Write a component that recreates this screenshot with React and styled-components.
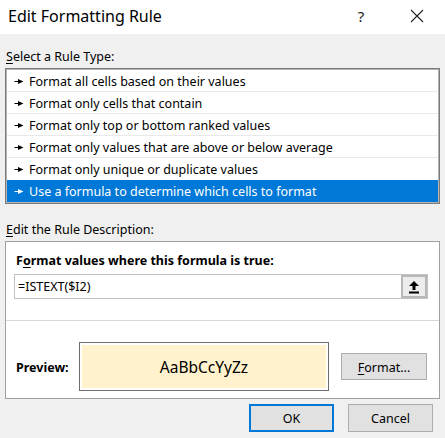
import React from "react";
import styled, { createGlobalStyle } from "styled-components";

const Global = createGlobalStyle`
  html, body { margin: 0; padding: 0; background: #f0f0f0; }
  body { font-family: "Noto Sans", "Segoe UI", sans-serif; font-size: 12.5px; color: #000; }
  #root { width: 445px; height: 438px; overflow: hidden; }
  * { box-sizing: border-box; }
`;

const Dialog = styled.div`
  width: 445px;
  height: 438px;
  background: #f0f0f0;
  display: flex;
  flex-direction: column;
`;

const TitleBar = styled.div`
  height: 34px;
  background: #fff;
  display: flex;
  align-items: center;
  padding-left: 8px;
`;

const Title = styled.div`
  flex: 1;
  font-size: 16px;
  line-height: 20px;
  margin-top: -2px;
`;

const Help = styled.div`
  width: 14px;
  font-size: 15px;
  line-height: 20px;
  margin-top: -2px;
  margin-right: 42px;
  text-align: center;
  color: #222;
`;

const Close = styled.div`
  width: 14px;
  height: 14px;
  margin-right: 21px;
  margin-top: -3px;
  display: flex;
`;

const Body = styled.div`
  padding: 0 5px;
  display: flex;
  flex-direction: column;
`;

const SectionLabel = styled.div`
  line-height: 16px;
  padding-top: 1px;
  height: 16px;
  margin-top: ${(p) => p.$top}px;
  margin-bottom: ${(p) => p.$bottom}px;
  padding-left: 1px;
`;

const U = styled.span`
  text-decoration: underline;
  text-underline-offset: 2px;
`;

const ListBox = styled.div`
  border: 1px solid #7a7a7a;
  box-shadow: inset 0 0 0 1px #b4b4b4;
  background: #fff;
  padding: 1px;
  display: flex;
  flex-direction: column;
`;

const Row = styled.div`
  height: 22px;
  display: flex;
  align-items: center;
  padding-left: 7px;
  padding-top: 2px;
  background: ${(p) => (p.$selected ? "#0078d7" : "#fff")};
  color: ${(p) => (p.$selected ? "#fff" : "#000")};
  border-bottom: 1px solid ${(p) => (p.$last ? "transparent" : "#e9e9e9")};
`;

const Bullet = styled.svg`
  width: 10px;
  height: 7px;
  margin-right: 5px;
  margin-top: -1px;
  flex: none;
`;

const DescBox = styled.div`
  border: 1px solid #a0a0a0;
  background: #fff;
  height: 158px;
  display: flex;
  flex-direction: column;
`;

const BoldLabel = styled.div`
  font-weight: bold;
  line-height: 16px;
  margin: 11px 0 0 10px;
`;

const FormulaInput = styled.div`
  margin: 5px 11px 0 8px;
  height: 25px;
  border: 1px solid #c2c2c2;
  display: flex;
  align-items: center;
  padding-left: 3px;
`;

const FormulaText = styled.div`
  flex: 1;
  line-height: 16px;
  padding-top: 1px;
`;

const CollapseBtn = styled.div`
  width: 26px;
  height: 23px;
  background: #ececec;
  border: 2px solid #b8b8b8;
  display: flex;
  align-items: center;
  justify-content: center;
`;

const Divider = styled.div`
  height: 1px;
  background: #d6d6d6;
  margin-top: 21px;
`;

const PreviewRow = styled.div`
  display: flex;
  align-items: center;
  margin-top: 21px;
  padding-left: 10px;
`;

const PreviewLabel = styled.div`
  font-weight: bold;
  width: 63px;
  padding-top: 1px;
`;

const PreviewBox = styled.div`
  width: 250px;
  height: 49px;
  border: 1px solid #6e6e6e;
  padding: 2px;
  display: flex;
`;

const PreviewFill = styled.div`
  flex: 1;
  background: #fff2cc;
  display: flex;
  align-items: center;
  justify-content: center;
  font-size: 15.5px;
  padding-top: 1px;
`;

const Button = styled.div`
  width: ${(p) => p.$w}px;
  height: ${(p) => p.$h}px;
  background: #e1e1e1;
  border: ${(p) => (p.$default ? "2px solid #0078d7" : "1px solid #adadad")};
  display: flex;
  align-items: center;
  justify-content: center;
  padding-top: 1px;
  margin-left: ${(p) => p.$ml || 0}px;
`;

const Footer = styled.div`
  display: flex;
  justify-content: flex-end;
  padding-right: 7px;
  margin-top: 5px;
`;

const items = [
  "Format all cells based on their values",
  "Format only cells that contain",
  "Format only top or bottom ranked values",
  "Format only values that are above or below average",
  "Format only unique or duplicate values",
  "Use a formula to determine which cells to format",
];

function Arrow({ color }) {
  return (
    <Bullet viewBox="0 0 10 7">
      <polygon points="0.5,3 4,3 4,1 9.5,3.5 4,6 4,4 0.5,4" fill={color} />
    </Bullet>
  );
}

export default function App() {
  return (
    <>
      <Global />
      <Dialog>
        <TitleBar>
          <Title>Edit Formatting Rule</Title>
          <Help>?</Help>
          <Close>
            <svg width="14" height="14" viewBox="0 0 14 14">
              <path d="M1 1 L13 13 M13 1 L1 13" stroke="#222" strokeWidth="1.1" fill="none" />
            </svg>
          </Close>
        </TitleBar>
        <Body>
          <SectionLabel $top={14} $bottom={4}>
            <U>S</U>elect a Rule Type:
          </SectionLabel>
          <ListBox>
            {items.map((t, i) => {
              const sel = i === items.length - 1;
              return (
                <Row key={t} $selected={sel} $last={i >= items.length - 2}>
                  <Arrow color={sel ? "#fff" : "#000"} />
                  {t}
                </Row>
              );
            })}
          </ListBox>
          <SectionLabel $top={17} $bottom={4}>
            <U>E</U>dit the Rule Description:
          </SectionLabel>
          <DescBox>
            <BoldLabel>
              F<U>o</U>rmat values where this formula is true:
            </BoldLabel>
            <FormulaInput>
              <FormulaText>=ISTEXT($I2)</FormulaText>
              <CollapseBtn>
                <svg width="12" height="14" viewBox="0 0 12 14">
                  <polygon points="6,1 11,6 7.5,6 7.5,10 4.5,10 4.5,6 1,6" fill="#000" />
                  <rect x="1" y="11.5" width="10" height="2" fill="#000" />
                </svg>
              </CollapseBtn>
            </FormulaInput>
            <Divider />
            <PreviewRow>
              <PreviewLabel>Preview:</PreviewLabel>
              <PreviewBox>
                <PreviewFill>AaBbCcYyZz</PreviewFill>
              </PreviewBox>
              <Button $w={86} $h={27} $ml={12}>
                <span>
                  <U>F</U>ormat...
                </span>
              </Button>
            </PreviewRow>
          </DescBox>
          <Footer>
            <Button $w={85} $h={28} $default>OK</Button>
            <Button $w={85} $h={28} $ml={14}>Cancel</Button>
          </Footer>
        </Body>
      </Dialog>
    </>
  );
}
